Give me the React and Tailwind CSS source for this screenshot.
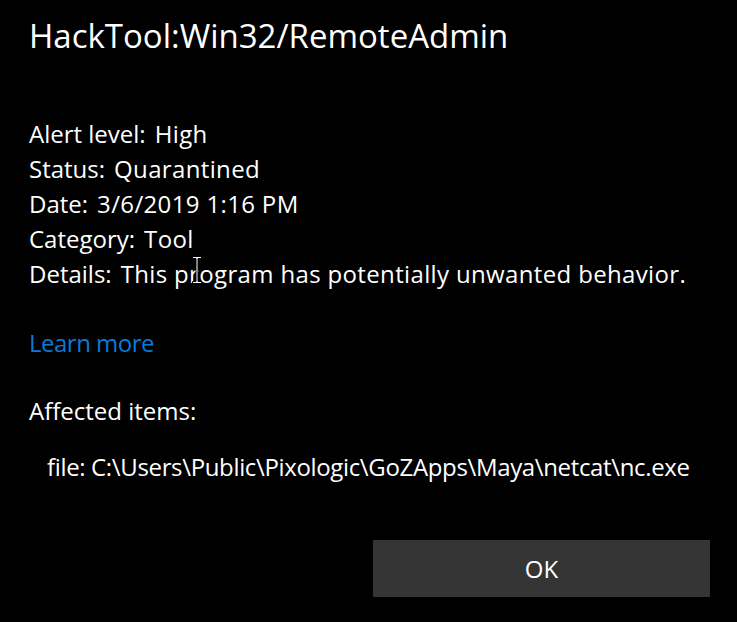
const rows = [
    ["Alert level:", "High"],
    ["Status:", "Quarantined"],
    ["Date:", "3/6/2019 1:16 PM"],
    ["Category:", "Tool"],
    ["Details:", "This program has potentially unwanted behavior."],
]

const Cursor = () => (
    <svg className="absolute left-[191px] top-[255px]" width="12" height="31" viewBox="0 0 12 31">
        <path d="M1.5 1.5h9v2h-3.5v23h3.5v2h-9v-2h3.5v-23h-3.5z" fill="#fff" stroke="#000" strokeWidth="1" />
    </svg>
)

export default function App() {
    return (
        <div className="relative w-[737px] h-[622px] bg-black text-white overflow-hidden font-['Open_Sans',sans-serif]">
            <div className="flex flex-col pl-[29px] pt-[14px]">
                <h1 className="text-[33px] leading-[44px]">HackTool:Win32/RemoteAdmin</h1>

                <div className="mt-[58px] flex flex-col text-[24px] leading-[35px]">
                    {rows.map(([label, value]) => (
                        <div key={label} className="flex gap-[9px]">
                            <span>{label}</span>
                            <span className="tracking-[0.35px]">{value}</span>
                        </div>
                    ))}
                </div>

                <a href="#" className="mt-[34px] text-[24px] leading-[35px] text-[#0a7ad8] tracking-[-0.5px]">Learn more</a>

                <div className="mt-[33px] text-[24px] leading-[35px]">Affected items:</div>
                <div className="mt-[21px] pl-[18px] text-[24px] leading-[35px] tracking-[-0.35px]">file: C:\Users\Public\Pixologic\GoZApps\Maya\netcat\nc.exe</div>
            </div>

            <div className="flex justify-end pr-[27px] mt-[56px]">
                <button className="w-[337px] h-[57px] bg-[#353535] text-[24px] text-white">OK</button>
            </div>

            <Cursor />
        </div>
    )
}
